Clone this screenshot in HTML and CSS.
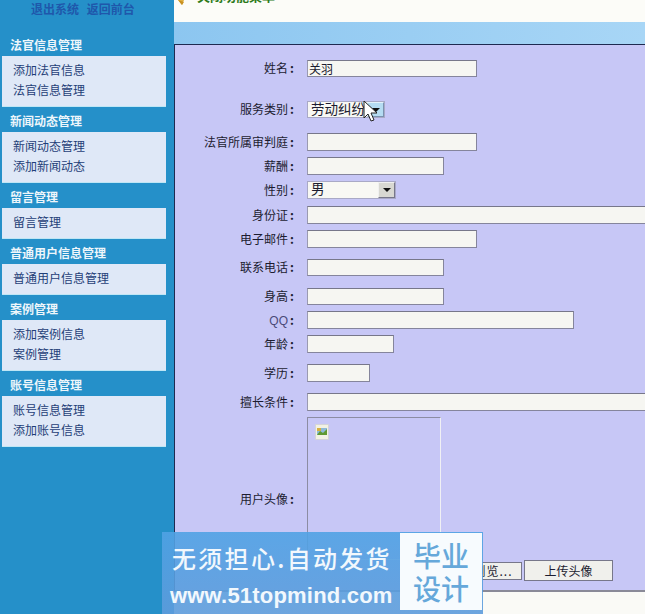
FILE: index.html
```html
<!DOCTYPE html>
<html lang="zh-CN">
<head>
<meta charset="utf-8">
<title>法官信息</title>
<link rel="stylesheet" href="styles.css">
</head>
<body>
<div class="page">
  <aside class="sidebar">
    <div class="toplinks"><a>退出系统</a> <a>返回前台</a></div>
    <nav class="menu">
      <section class="group"><h3>法官信息管理</h3><ul><li>添加法官信息</li><li>法官信息管理</li></ul></section>
      <section class="group"><h3>新闻动态管理</h3><ul><li>新闻动态管理</li><li>添加新闻动态</li></ul></section>
      <section class="group"><h3>留言管理</h3><ul><li>留言管理</li></ul></section>
      <section class="group"><h3>普通用户信息管理</h3><ul><li>普通用户信息管理</li></ul></section>
      <section class="group"><h3>案例管理</h3><ul><li>添加案例信息</li><li>案例管理</li></ul></section>
      <section class="group"><h3>账号信息管理</h3><ul><li>账号信息管理</li><li>添加账号信息</li></ul></section>
    </nav>
  </aside>
  <main class="main">
    <div class="topbar">
      <svg class="arrow-icon" width="9" height="6" viewBox="0 0 9 6"><path d="M8 0 L2 0 L6 5 Z" fill="#e0b040"/><path d="M2 0 L6 5 L8 2" fill="#c89020"/></svg>
      <span class="toggle">关闭功能菜单</span>
    </div>
    <div class="band"></div>
    <form class="panel">
      <div class="row row-first"><label>姓名<span class="colon">:</span></label><input class="w170 h17" value="关羽"></div>
      <div class="row gap-l"><label>服务类别<span class="colon">:</span></label><div class="select w78 h17 hover"><span>劳动纠纷</span><i class="drop"></i></div></div>
      <div class="row gap-m"><label>法官所属审判庭<span class="colon">:</span></label><input class="w170"></div>
      <div class="row gap-s"><label>薪酬<span class="colon">:</span></label><input class="w137"></div>
      <div class="row gap-s"><label>性别<span class="colon">:</span></label><div class="select w89"><span>男</span><i class="drop"></i></div></div>
      <div class="row gap-t"><label>身份证<span class="colon">:</span></label><input class="w360"></div>
      <div class="row gap-s"><label>电子邮件<span class="colon">:</span></label><input class="w170"></div>
      <div class="row gap-w"><label>联系电话<span class="colon">:</span></label><input class="w137 h17"></div>
      <div class="row gap-x"><label>身高<span class="colon">:</span></label><input class="w137 h17"></div>
      <div class="row gap-s"><label><span class="latin">QQ</span><span class="colon">:</span></label><input class="w267"></div>
      <div class="row gap-s"><label>年龄<span class="colon">:</span></label><input class="w87"></div>
      <div class="row gap-w"><label>学历<span class="colon">:</span></label><input class="w63"></div>
      <div class="row gap-w"><label>擅长条件<span class="colon">:</span></label><input class="w360"></div>
      <div class="row gap-s">
        <label>用户头像<span class="colon">:</span></label>
        <div class="photo-cell">
          <div class="photo">
            <svg class="broken" width="14" height="16" viewBox="0 0 14 16"><rect x=".5" y=".5" width="13" height="15" fill="#f2f2e4" stroke="#d4d4d8"/><rect x="2" y="4" width="10" height="7" fill="#8fbbd8"/><path d="M2 11 L5 7 L8 9 L12 5 V11 Z" fill="#5f9a30"/><rect x="2" y="4" width="4" height="3" fill="#d8b040"/></svg>
          </div>
          <div class="uploads"><button type="button" class="browse">浏览...</button><button type="button" class="upload">上传头像</button></div>
        </div>
      </div>
    </form>
    <div class="foot"></div>
  </main>
</div>
<svg class="cursor" width="16" height="24" viewBox="0 0 16 24"><path d="M1 1 L1 18 L5 14 L8 21 L11 20 L8 13 L14 13 Z" fill="#fff" stroke="#222" stroke-width="1"/></svg>
<aside class="promo">
  <div class="promo-text"><p class="promo-line">无须担心.自动发货</p><p class="promo-url">www.51topmind.com</p></div>
  <div class="promo-badge"><span>毕业</span><span>设计</span></div>
</aside>
</body>
</html>
```
FILE: styles.css
```css
* { box-sizing: border-box; }
html, body { margin: 0; padding: 0; }
body {
  width: 645px; height: 614px; overflow: hidden; position: relative;
  font: 12px/1.2 "Noto Sans CJK SC", "Liberation Sans", sans-serif;
  color: #1c1c30;
  background: #fafaf6;
}
.page { display: flex; width: 645px; height: 614px; }

.sidebar { flex: 0 0 174px; background: #2590c9; padding-top: 1px; }
.toplinks { height: 17px; padding-left: 31px; color: #1f57ab; font-weight: 700; line-height: 15px; word-spacing: 5px; }
.menu { display: flex; flex-direction: column; padding-top: 19px; }
.group h3 {
  margin: 0; height: 19px; padding-left: 10px; color: #eef6fb;
  font-size: 12px; font-weight: 700; line-height: 15px;
}
.group ul {
  list-style: none; margin: 0 0 6px 2px; padding: 4px 0 6px 11px; width: 164px;
  background: #dfe8f7; border-bottom: 1px solid #bfe6f5;
  color: #1f3f78; line-height: 20px;
}

.main { flex: 1; min-width: 0; display: flex; flex-direction: column; }
.topbar { height: 22px; background: #fcfcf8; display: flex; align-items: flex-start; padding-left: 2px; overflow: hidden; }
.arrow-icon { flex: none; margin-right: 12px; }
.toggle { margin-top: -12px; color: #2c7a18; font-size: 13px; font-weight: 700; line-height: 16px; }
.band { height: 22px; background: linear-gradient(90deg, #8cc6f0, #a8d6f6); }
.panel {
  height: 548px; background: #c7c7f6; overflow: hidden;
  border-top: 1px solid #1e2a50; border-left: 1px solid #1e2a50; border-bottom: 2px solid #8a8a98;
}
.row { display: flex; align-items: center; min-width: 0; }
.row label { flex: 0 0 122px; text-align: right; white-space: nowrap; }
.latin { color: #4a4a78; font: 12px/1 "Liberation Sans", sans-serif; }
.colon { display: inline-block; width: 9px; padding-left: 2px; text-align: left; font-weight: 700; }
.row input, .row .select { margin-left: 10px; flex: none; }
.row-first { margin-top: 15px; }
.gap-s { margin-top: 6px; }
.gap-t { margin-top: 7px; }
.gap-m { margin-top: 15px; }
.gap-l { margin-top: 24px; }
.gap-w { margin-top: 11px; }
.gap-x { margin-top: 12px; }

input {
  height: 18px; padding: 0 1px; margin: 0;
  font: 12px/16px "Noto Sans CJK SC", sans-serif; color: #1c1c30;
  background: #f6f6f2;
  border: 1px solid #85859c; border-top-color: #77778a; border-left-color: #9a9ab0;
}
.w63 { width: 63px; }
.w87 { width: 87px; }
.w137 { width: 137px; }
.w170 { width: 170px; }
.w267 { width: 267px; }
.w360 { width: 360px; }
.w78 { width: 78px; }
.w89 { width: 89px; }

.select {
  height: 18px; display: flex; align-items: stretch; justify-content: space-between;
  background: #f8f8f4; border: 1px solid #a9a9c6; font-size: 13.5px; line-height: 13px;
}
.select span { padding-left: 3px; white-space: nowrap; }
.drop {
  flex: 0 0 17px; position: relative; background: #d8d8d2;
  border: 1px solid #77778a; border-color: #f0f0f0 #77778a #77778a #f0f0f0;
}
.drop::after {
  content: ""; position: absolute; left: 4px; top: 5px;
  border: 4px solid transparent; border-top: 4px solid #111; border-bottom: 0;
}
.hover .drop { background: #b5dcf2; border-color: #e4f2fa #7a92b0 #7a92b0 #e4f2fa; }
.hover span { margin-right: -20px; }
.h17 { height: 17px; }

.photo-cell { margin-left: 10px; flex: none; width: 307px; display: flex; flex-direction: column; }
.photo {
  width: 134px; height: 143px; padding: 6px 7px;
  border: 1px solid; border-color: #8c8ca2 #f0f0f4 #f0f0f4 #8c8ca2;
}
.broken { display: block; }
.uploads { display: flex; justify-content: flex-end; align-items: center; height: 21px; }
button {
  font: 12px/1 "Noto Sans CJK SC", sans-serif; color: #1c1c30; background: #f0f0ec;
  border: 1px solid #77778a; border-radius: 0; padding: 0;
}
.browse { width: 60px; height: 18px; letter-spacing: 1px; padding-left: 2px; }
.upload { width: 89px; height: 21px; margin-right: 1px; margin-left: 2px; }
.foot { flex: 1; background: #fafaf6; }

.cursor { position: absolute; left: 363px; top: 100px; }

.promo {
  position: absolute; left: 162px; top: 532px; width: 321px; height: 82px;
  background: linear-gradient(180deg, rgba(80, 162, 228, .9), rgba(94, 156, 220, .9));
  display: flex;
}
.promo-text { flex: 0 0 238px; color: #f2f8fd; overflow: hidden; white-space: nowrap; }
.promo-line { margin: 11px 0 0 10px; font-size: 24px; line-height: 30px; font-weight: 500; letter-spacing: 2.3px; }
.promo-url { margin: 10px 0 0 8px; font: 700 22px/26px "Liberation Sans", sans-serif; letter-spacing: .2px; }
.promo-badge {
  flex: 0 0 82px; height: 77px; margin: 1px 0 0 0; background: #f7fbfe; color: #66a8da;
  display: flex; flex-direction: column; align-items: center; justify-content: center;
  font-size: 28px; font-weight: 500; line-height: 33px;
}
```
